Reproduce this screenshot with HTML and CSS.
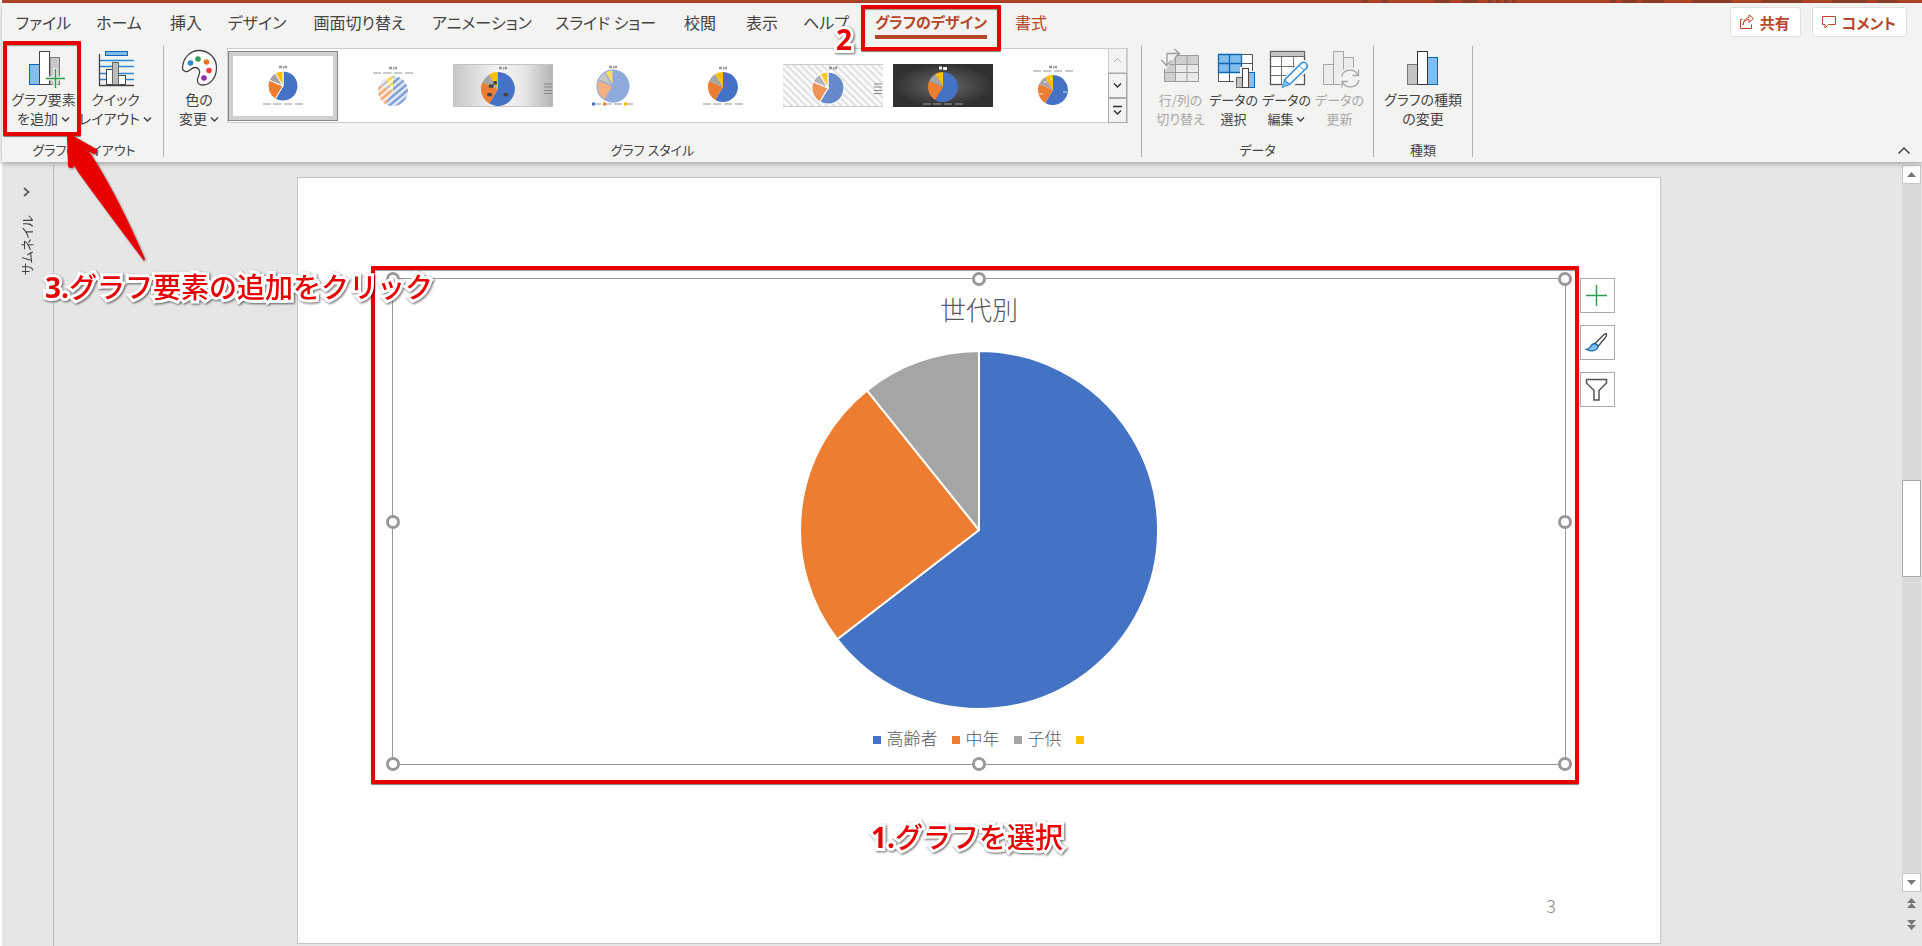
FILE: index.html
```html
<!DOCTYPE html>
<html lang="ja">
<head>
<meta charset="utf-8">
<title>グラフのデザイン</title>
<link rel="stylesheet" href="styles.css">
</head>
<body>
<svg class="defs" aria-hidden="true">
  <defs>
    <g id="pie">
      <path class="blue" d="M0 0V-15A15 15 0 1 1 -7.7 12.9Z"/>
      <path class="orange" d="M0 0L-7.7 12.9A15 15 0 0 1 -13.8 -5.9Z"/>
      <path class="grey" d="M0 0L-13.8 -5.9A15 15 0 0 1 -7.7 -12.9Z"/>
      <path class="gold" d="M0 0L-7.7 -12.9A15 15 0 0 1 0 -15Z"/>
    </g>
    <g id="caption"><path d="M-4 0H-1M0 0.500H1M1.500 0H4" stroke="#777" stroke-width="2.500" opacity=".75"/></g>
    <g id="keys"><path d="M-20 0H-12M-10 0H-1.500M1 0H9M12 0H20" stroke="#999" stroke-width="1.600" opacity=".7"/></g>
    <g id="sidekeys"><path d="M0 0H8M0 3H8M0 6.500H8M0 9.500H8" stroke="#888" stroke-width="1.200"/></g>
    <linearGradient id="silver" x1="0" y1="0" x2="1" y2="0"><stop offset="0" stop-color="#c6c6c6"/><stop offset=".45" stop-color="#f4f4f4"/><stop offset=".7" stop-color="#e8e8e8"/><stop offset="1" stop-color="#b4b4b4"/></linearGradient>
    <radialGradient id="coal"><stop offset="0" stop-color="#6a6a6a"/><stop offset="1" stop-color="#303030"/></radialGradient>
    <pattern id="hatch" width="5" height="5" patternUnits="userSpaceOnUse" patternTransform="rotate(-45)"><rect width="5" height="5" fill="#fafafa"/><rect width="2" height="5" fill="#e0e0e0"/></pattern>
    <pattern id="waves" width="5" height="5" patternUnits="userSpaceOnUse" patternTransform="rotate(50)"><rect width="2.600" height="5" fill="#fff" opacity=".8"/></pattern>
    <path id="chev" d="M1 2.500L4.500 6L8 2.500" fill="none" stroke="currentColor" stroke-width="1.500"/>
  </defs>
</svg>

<div class="titlebar"><svg width="760" height="3" aria-hidden="true"><path d="M200 1H206M220 1H226M272 1H288M300 1H316M326 1H330M334 1H338M342 1H346M350 1H354M448 1H454M460 1H475M480 1H502M530 1H570M600 1H640M670 1H705M715 1H735" stroke="#8f4029" stroke-width="3"/></svg></div>

<header class="ribbon">
  <div class="tabrow">
    <nav class="tabs">
      <button class="tab">ファイル</button>
      <button class="tab">ホーム</button>
      <button class="tab">挿入</button>
      <button class="tab">デザイン</button>
      <button class="tab">画面切り替え</button>
      <button class="tab">アニメーション</button>
      <button class="tab">スライド ショー</button>
      <button class="tab">校閲</button>
      <button class="tab">表示</button>
      <button class="tab">ヘルプ</button>
      <button class="tab active"><span class="tab-name">グラフのデザイン</span><span class="mark mark-tab"></span><span class="note note-2"><b>2</b></span></button>
      <button class="tab context">書式</button>
    </nav>
    <div class="actions">
      <button class="action"><svg width="16" height="16" viewBox="0 0 16 16"><path d="M3.500 5.500H1.500V14.500H12.500V10.500M4 11C4.300 7.500 6.500 5.500 10 5.500V8.500L14.500 4.500L10 1V3.500C6.500 3.800 4.500 6.500 4 11Z"/></svg>共有</button>
      <button class="action"><svg width="16" height="16" viewBox="0 0 16 16"><path d="M1.500 2.500H14.500V10.500H7.500L4 14V10.500H1.500Z"/></svg>コメント</button>
    </div>
  </div>

  <div class="groups">
    <section class="group group-layout">
      <div class="tools">
        <button class="tool">
          <svg class="icon" width="40" height="40" viewBox="0 0 40 40"><rect x="5.500" y="15.500" width="10" height="20" fill="#83bdec" stroke="#1066b5"/><rect x="26" y="8.500" width="9.500" height="27" fill="#c8c8c8" stroke="#7a7a7a"/><rect x="15.500" y="2.500" width="10" height="33" fill="#fff" stroke="#444"/><path d="M31.500 19V40M21 29.500H41" stroke="#f3f3f1" stroke-width="4"/><path d="M31.500 20V39M22 29.500H41" stroke="#2f9e4e" stroke-width="1.500"/></svg>
          <span>グラフ要素</span><span>を追加 <svg class="chev" width="9" height="9"><use href="#chev"/></svg></span>
          <span class="mark mark-tool"></span>
        </button>
        <button class="tool">
          <svg class="icon" width="40" height="40" viewBox="0 0 40 40"><rect x="9.500" y="2.500" width="22" height="4" fill="#83bdec" stroke="#1066b5"/><path d="M4 11.500H38M4 17.500H38M4 24.500H38M4 30.500H38" stroke="#2a86cf" stroke-width="1.300"/><rect x="10.500" y="20.500" width="6" height="15" fill="#fff" stroke="#444"/><rect x="22.500" y="26.500" width="7" height="9" fill="#fff" stroke="#444"/><rect x="16.500" y="13.500" width="6" height="22" fill="#bbb" stroke="#666"/><path d="M3.500 5V36.500H38" fill="none" stroke="#444" stroke-width="1.300"/></svg>
          <span>クイック</span><span>レイアウト <svg class="chev" width="9" height="9"><use href="#chev"/></svg></span>
        </button>
      </div>
      <h2 class="group-name">グラフのレイアウト</h2>
    </section>

    <section class="group group-style">
      <div class="tools">
        <button class="tool">
          <svg class="icon" width="40" height="40" viewBox="0 0 40 40"><path d="M3.500 19C4 8 12 1.500 20 1.500C30 1.500 37.500 9 37.500 18.500C37.500 29 31 36 24 36C17.500 36 17.500 31 20 26C22 21.500 19.500 18.500 16 18.500C12 18.500 10 23.500 7 22.500C4.500 22 3.500 21 3.500 19Z" fill="#fff" stroke="#444" stroke-width="1.300"/><circle cx="11.500" cy="14" r="2.800" fill="#2b88d0"/><circle cx="19" cy="10" r="2.800" fill="#2f9e4e"/><circle cx="27.500" cy="13" r="2.800" fill="#e8761a"/><circle cx="30" cy="21.500" r="2.800" fill="#f03a3e"/><circle cx="25" cy="29" r="2.800" fill="#8b2fa5"/></svg>
          <span>色の</span><span>変更 <svg class="chev" width="9" height="9"><use href="#chev"/></svg></span>
        </button>
        <div class="gallery">
          <button class="style selected" aria-label="スタイル 1"><svg width="100" height="60"><use href="#caption" x="50" y="11"/><g class="gap" transform="translate(50 30)"><use href="#pie"/></g><use href="#keys" x="50" y="48"/></svg></button>
          <button class="style" aria-label="スタイル 2"><svg width="100" height="60"><use href="#caption" x="50" y="12"/><use href="#keys" x="50" y="17"/><g opacity=".7" transform="translate(50 35)"><use href="#pie"/><circle r="16" fill="url(#waves)"/></g></svg></button>
          <button class="style" aria-label="スタイル 3"><svg width="100" height="60"><rect y="8" width="100" height="43" fill="url(#silver)"/><path d="M0 8.500H100M0 50.500H100" stroke="#c4c4c4"/><use href="#caption" x="50" y="12"/><g transform="translate(45 33) scale(1.130)"><use href="#pie"/><path d="M-9.500 5H-5.500M5 5H9M-8 -2.500H-4M-4 -5.500H-1" stroke="#444" stroke-width="3"/></g><use href="#sidekeys" x="91" y="28"/></svg></button>
          <button class="style" aria-label="スタイル 4"><svg width="100" height="60"><use href="#caption" x="50" y="11"/><g class="soft" transform="translate(50 30) scale(1.070)"><use href="#pie"/></g><use href="#keys" x="50" y="48"/><path d="M29 48H32" stroke="#4472c4" stroke-width="3"/><path d="M40 48H43" stroke="#ed7d31" stroke-width="3"/><path d="M61 48H64" stroke="#ffc000" stroke-width="3"/></svg></button>
          <button class="style" aria-label="スタイル 5"><svg width="100" height="60"><use href="#caption" x="50" y="12"/><use href="#pie" x="50" y="31"/><use href="#keys" x="50" y="48"/></svg></button>
          <button class="style" aria-label="スタイル 6"><svg width="100" height="60"><rect y="8" width="100" height="43" fill="url(#hatch)"/><path d="M0 8.500H100M0 50.500H100" stroke="#ccc"/><use href="#caption" x="50" y="12"/><g class="gap" opacity=".8" transform="translate(45 32) scale(1.070)"><use href="#pie"/></g><use href="#sidekeys" x="91" y="28"/></svg></button>
          <button class="style" aria-label="スタイル 7"><svg width="100" height="60"><rect y="8" width="100" height="43" fill="url(#coal)"/><path d="M-4 12H-1M0 12.500H4" transform="translate(50 0)" stroke="#eee" stroke-width="3"/><use href="#pie" x="50" y="31"/><use href="#keys" x="50" y="48"/></svg></button>
          <button class="style" aria-label="スタイル 8"><svg width="100" height="60"><use href="#caption" x="50" y="11"/><use href="#keys" x="50" y="15"/><use href="#pie" x="50" y="34"/><path d="M36 38H40M60 36H64M41 26H44M47 23H49" stroke="#fff" opacity=".8"/></svg></button>
          <div class="gallery-nav">
            <button class="off" aria-label="前の行"><svg width="9" height="9"><path d="M1 6L4.500 2.500L8 6" fill="none" stroke="currentColor"/></svg></button>
            <button aria-label="次の行"><svg width="9" height="9"><use href="#chev"/></svg></button>
            <button aria-label="その他"><svg width="9" height="12"><path d="M0 1.500H9" stroke="currentColor" stroke-width="1.500"/><use href="#chev" y="3"/></svg></button>
          </div>
        </div>
      </div>
      <h2 class="group-name">グラフ スタイル</h2>
    </section>

    <section class="group group-data">
      <div class="tools">
        <button class="tool" disabled>
          <svg class="icon" width="40" height="40" viewBox="0 0 40 40"><rect x="3.500" y="6.500" width="34" height="26" fill="#e9e9e9"/><path d="M3.500 6.500H37.500V15H15V32.500H3.500Z" fill="#cfcfcf"/><path d="M3.500 6.500H37.500V32.500H3.500ZM14.500 6.500V32.500M26 6.500V32.500M3.500 15.500H37.500M3.500 23.500H37.500" fill="none" stroke="#9c9c9c"/><path d="M-1 0H20L5 20H-1Z" fill="#f3f3f1"/><path d="M6 16V4.500H18M0.500 11L5.500 16.500L10.500 11.500M13.500 0L18.500 4.500L13.500 9.500" fill="none" stroke="#9c9c9c" stroke-width="1.300"/></svg>
          <span>行/列の</span><span>切り替え</span>
        </button>
        <button class="tool">
          <svg class="icon" width="40" height="40" viewBox="0 0 40 40"><rect x="4.500" y="5.500" width="34" height="27" fill="#fff"/><rect x="4.500" y="5.500" width="23" height="18" fill="#83bdec"/><path d="M4.500 5.500H38.500V32.500H4.500ZM15.500 5.500V32.500M27.500 5.500V32.500M4.500 14.500H38.500M4.500 23.500H38.500" fill="none" stroke="#555"/><path d="M4.500 5.500H27.500V23.500H4.500ZM15.500 5.500V23.500M4.500 14.500H27.500" fill="none" stroke="#1066b5" stroke-width="1.300"/><path d="M20 26H26V18H36V22H42V40H20Z" fill="#f3f3f1"/><rect x="22.500" y="28.500" width="6" height="10" fill="#c4c4c4" stroke="#666"/><rect x="34.500" y="23.500" width="6" height="15" fill="#83bdec" stroke="#1066b5"/><rect x="28.500" y="19.500" width="6" height="19" fill="#fff" stroke="#444"/></svg>
          <span>データの</span><span>選択</span>
        </button>
        <button class="tool">
          <svg class="icon" width="40" height="40" viewBox="0 0 40 40"><rect x="3.500" y="2.500" width="34" height="33" fill="#fff" stroke="#555" stroke-width="1.300"/><rect x="3.500" y="2.500" width="34" height="5" fill="#c4c4c4" stroke="#666"/><path d="M14.500 8V35M26.500 8V35M4 17.500H37M4 26.500H37" stroke="#777"/><path d="M14 39L17 29L32 13L38 11L41 16L40 22L25 39Z" fill="#f3f3f1"/><path d="M17.500 31L34 14.500Q37.500 12 39.500 15T39 19.500L22.500 35.500Z" fill="#fff" stroke="#2b8edb" stroke-width="1.500"/><path d="M15 38.500L17.500 31L22.500 35.500Z" fill="#83bdec" stroke="#2b8edb"/><path d="M32 16.500L37 21" stroke="#2b8edb"/></svg>
          <span>データの</span><span>編集 <svg class="chev" width="9" height="9"><use href="#chev"/></svg></span>
        </button>
        <button class="tool" disabled>
          <svg class="icon" width="40" height="40" viewBox="0 0 40 40"><g fill="#ececec" stroke="#a6a6a6"><rect x="3.500" y="15.500" width="10" height="20"/><rect x="23.500" y="8.500" width="10" height="27"/><rect x="13.500" y="2.500" width="10" height="33"/></g><circle cx="30" cy="29.500" r="11" fill="#f3f3f1"/><path d="M21.500 28A8.800 8.800 0 0 1 38 26M38.500 20.500V26.500H32.500M39 31A8.800 8.800 0 0 1 22.500 33M22 38.500V32.500H28" fill="none" stroke="#a6a6a6" stroke-width="1.300"/></svg>
          <span>データの</span><span>更新</span>
        </button>
      </div>
      <h2 class="group-name">データ</h2>
    </section>

    <section class="group group-type">
      <div class="tools">
        <button class="tool">
          <svg class="icon" width="40" height="40" viewBox="0 0 40 40"><rect x="4.500" y="15.500" width="10" height="20" fill="#c4c4c4" stroke="#777"/><rect x="24.500" y="8.500" width="10" height="27" fill="#83bdec" stroke="#1066b5"/><rect x="14.500" y="2.500" width="10" height="33" fill="#fff" stroke="#333"/></svg>
          <span>グラフの種類</span><span>の変更</span>
        </button>
      </div>
      <h2 class="group-name">種類</h2>
    </section>
    <button class="collapse" aria-label="リボンを折りたたむ"><svg width="14" height="9"><path d="M1.500 7.500L7 2L12.500 7.500" fill="none" stroke="#444" stroke-width="1.500"/></svg></button>
  </div>
</header>

<main class="workspace">
  <aside class="thumbs">
    <button aria-label="サムネイルを展開"><svg width="9" height="10"><path d="M2 1L6.500 5L2 9" fill="none" stroke="#666" stroke-width="2"/></svg></button>
    <span class="thumbs-name">サムネイル</span>
  </aside>
  <div class="canvas">
    <article class="slide">
      <figure class="chart">
        <figcaption class="chart-title">世代別</figcaption>
        <svg class="pie" viewBox="-179 -179 358 358" role="img" aria-label="世代別の円グラフ">
          <g stroke="#fff" stroke-width="2" stroke-linejoin="round"><path class="blue" d="M0 0V-179A179 179 0 1 1 -141.800 109.200Z"/><path class="orange" d="M0 0L-141.800 109.200A179 179 0 0 1 -112 -139.600Z"/><path class="grey" d="M0 0L-112 -139.600A179 179 0 0 1 0 -179Z"/></g>
        </svg>
        <ul class="legend"><li class="k-blue">高齢者</li><li class="k-orange">中年</li><li class="k-grey">子供</li><li class="k-gold"></li></ul>
        <i class="handle n w"></i><i class="handle n c"></i><i class="handle n e"></i>
        <i class="handle m w"></i><i class="handle m e"></i>
        <i class="handle s w"></i><i class="handle s c"></i><i class="handle s e"></i>
        <div class="mark mark-chart"></div>
        <div class="chart-tools">
          <button aria-label="グラフ要素"><svg width="24" height="24"><path d="M11.500 1V22M1 11.500H22" stroke="#2f9e4e" stroke-width="1.500"/></svg></button>
          <button aria-label="グラフ スタイル"><svg width="24" height="24"><path d="M10 12.500L18 4.500Q21 2 21.500 3T20 7L13 15.500Z" fill="#fff" stroke="#444" stroke-width="1.300"/><path d="M1.500 18.500C6 18 5 13 9.500 12.500C12 13 13.500 14.500 12.500 17C10.500 20.500 5 20.500 1.500 18.500Z" fill="#83bdec" stroke="#1066b5" stroke-width="1.300"/></svg></button>
          <button aria-label="グラフ フィルター"><svg width="24" height="24"><path d="M1.500 1.500H21.500V5L14 12.500V22H9V12.500L1.500 5Z" fill="#fff" stroke="#555" stroke-width="1.500"/></svg></button>
        </div>
      </figure>
      <p class="note note-1"><b>1.</b>グラフを選択</p>
      <footer class="page-no">3</footer>
    </article>
  </div>
  <div class="scroll">
    <button class="step" aria-label="上へ"><svg width="9" height="5"><path d="M0 5L4.500 0L9 5Z"/></svg></button>
    <div class="track"><div class="thumb"></div></div>
    <button class="step" aria-label="下へ"><svg width="9" height="5"><path d="M0 0L4.500 5L9 0Z"/></svg></button>
    <button class="jump" aria-label="前のスライド"><svg width="9" height="10"><path d="M0 5L4.500 0L9 5ZM0 10L4.500 5L9 10Z"/></svg></button>
    <button class="jump" aria-label="次のスライド"><svg width="9" height="10"><path d="M0 0L4.500 5L9 0ZM0 5L4.500 10L9 5Z"/></svg></button>
  </div>
</main>

<svg class="arrow" width="84" height="134" viewBox="0 0 84 134" aria-hidden="true"><path d="M8 8L31 21" stroke="#e80000" stroke-width="6" stroke-linecap="round"/><path d="M7 7L8 35" stroke="#e80000" stroke-width="6" stroke-linecap="round"/><path d="M4 4L28 24Q56 68 82 129L81 131Q44 82 15 42L7 28Z" fill="#e80000"/></svg>
<p class="note note-3"><b>3.</b>グラフ要素の追加をクリック</p>
</body>
</html>
```

FILE: styles.css
```css
* { box-sizing: border-box; }

body {
  margin: 0;
  padding-left: 2px;
  height: 100vh;
  display: flex;
  flex-direction: column;
  position: relative;
  overflow: hidden;
  background: #fff;
  color: #444;
  font-family: "Noto Sans CJK JP", sans-serif;
  font-size: 14px;
  font-feature-settings: "palt";
}

button {
  margin: 0;
  padding: 0;
  border: 0;
  background: none;
  color: inherit;
  font: inherit;
  font-feature-settings: inherit;
  white-space: nowrap;
}

.defs { position: absolute; width: 0; height: 0; }
.blue { fill: #4472c4; }
.orange { fill: #ed7d31; }
.grey { fill: #a5a5a5; }
.gold { fill: #ffc000; }
.gap { stroke: #fff; stroke-width: 1; }
.soft { opacity: .6; stroke: #4472c4; stroke-width: 1; }

.titlebar { height: 3px; background: #b7472a; display: flex; justify-content: flex-end; }

/* Ribbon */
.ribbon { height: 159px; background: #f3f3f1; position: relative; z-index: 1; box-shadow: 0 1px 6px rgba(0, 0, 0, .35); }
.tabrow { height: 43px; display: flex; justify-content: space-between; }
.tabs { display: grid; grid-template-columns: 77px 74px 60px 82px 123px 122px 125px 64px 60px 68px 142px 58px; padding-left: 3px; }
.tab { position: relative; padding-top: 9px; height: 43px; font-size: 16px; line-height: 20px; display: flex; justify-content: center; align-items: flex-start; }
.tab.active { color: #b7472a; font-size: 15px; font-weight: 700; }
.tab.context { color: #b7472a; }
.tab-name { border-bottom: 4px solid #b7472a; padding-bottom: 3px; }
.actions { display: flex; gap: 11px; padding: 4px 15px 0 0; }
.action { height: 30px; padding: 0 10px 0 8px; display: flex; align-items: center; gap: 5px; background: #fff; border: 1px solid #e1dfdd; border-radius: 3px; color: #b7472a; font-size: 15px; font-weight: 700; }
.action svg { fill: none; stroke: #b7472a; stroke-width: 1; }

.groups { display: flex; height: 116px; }
.group { height: 111px; display: flex; flex-direction: column; border-right: 1px solid #b1b1b1; }
.tools { display: flex; }
.group-name { margin: auto 0 0; font-size: 13px; font-weight: 400; line-height: 14px; text-align: center; }
.tool { position: relative; padding-top: 3px; display: flex; flex-direction: column; align-items: center; line-height: 19px; }
.tool:disabled { color: #a8a8a8; }
.icon { overflow: visible; margin-bottom: 1px; }
.icon + span { height: 19px; }
.chev { vertical-align: 0; }
.group-layout { width: 162px; padding-left: 3px; }
.group-layout .tools { display: grid; grid-template-columns: 77px 67px; }
.group-style { width: 978px; }
.group-style .tool { width: 63px; padding-left: 7px; }
.group-data { width: 232px; }
.group-data .tools { padding-left: 12px; display: grid; grid-template-columns: repeat(4, 53px); font-size: 13px; }
.group-type { width: 99px; }
.group-type .tools { justify-content: center; }
.collapse { margin: auto 11px 3px auto; }

.gallery { display: flex; align-items: center; margin-top: 2px; height: 75px; background: #fff; border: 1px solid #ccc; }
.style { width: 110px; height: 70px; display: grid; place-items: center; }
.style.selected { background: #fff; border: 1px solid #888; box-shadow: inset 0 0 0 4px #cfcfcd; }
.gallery-nav { width: 19px; height: 75px; display: grid; grid-template-rows: repeat(3, 1fr); }
.gallery-nav button { display: grid; place-items: center; background: #f3f3f1; border: 1px solid #aaa; color: #333; }
.gallery-nav .off { color: #aaa; border-color: #ccc; }

/* Editing area */
.workspace { flex: 1; min-height: 0; display: grid; grid-template-columns: 52px 1fr 20px; background: #e6e6e6; }
.thumbs { margin-top: 3px; border-right: 1px solid #bdbdbd; padding: 22px 3px 0 0; display: flex; flex-direction: column; align-items: center; gap: 18px; }
.thumbs button { line-height: 10px; }
.thumbs svg { display: block; }
.thumbs-name { writing-mode: vertical-rl; text-orientation: sideways; transform: rotate(180deg); font-size: 13px; }
.canvas { min-height: 0; padding: 15px 0 2px 2px; display: flex; justify-content: center; }
.slide { height: 100%; aspect-ratio: 16 / 9; background: #fff; border: 1px solid #c6c6c6; padding: 100px 94px 0; display: flex; flex-direction: column; }

.chart { position: relative; height: 487px; margin: 0; border: 1px solid #999; display: flex; flex-direction: column; align-items: center; }
.chart-title { margin-top: 13px; font-size: 26px; line-height: 34px; font-weight: 300; color: #595959; }
.pie { width: 358px; height: 358px; margin-top: 25px; }
.legend { list-style: none; margin: 17px 0 0; padding: 0; display: flex; gap: 15px; font-size: 17px; line-height: 24px; font-weight: 300; color: #595959; }
.legend li { display: flex; align-items: center; gap: 5px; }
.legend li::before { content: ""; width: 8px; height: 8px; margin-top: 3px; background: currentColor; }
.k-blue::before { color: #4472c4; }
.k-orange::before { color: #ed7d31; }
.k-grey::before { color: #a5a5a5; }
.k-gold::before { color: #ffc000; }

.handle { position: absolute; width: 14px; height: 14px; margin: -7px; border: 3px solid #999; border-radius: 50%; background: #fff; }
.handle.n { top: 0; }
.handle.m { top: 50%; }
.handle.s { top: 100%; }
.handle.w { left: 0; }
.handle.c { left: 50%; }
.handle.e { left: 100%; }
.chart-tools { position: absolute; top: -1px; left: calc(100% + 15px); display: grid; gap: 12px; }
.chart-tools button { width: 35px; height: 35px; display: grid; place-items: center; background: #fff; border: 1px solid #ababab; }

.page-no { margin-top: 38px; padding-right: 10px; text-align: right; font-size: 18px; line-height: 24px; font-weight: 300; color: #898989; }

.scroll { padding: 3px 1px 0 0; display: flex; flex-direction: column; fill: #777; }
.step { height: 19px; display: grid; place-items: center; background: #fff; border: 1px solid #c6c6c6; }
.track { flex: 1; background: #dadada; display: grid; grid-template-rows: 43fr 14fr 43fr; }
.thumb { grid-row: 2; background: #fff; border: 1px solid #ababab; }
.jump { height: 22px; display: grid; place-items: center; }
.jump:last-child { margin-bottom: 10px; }

/* Callouts */
.mark { position: absolute; border: 4px solid #e80000; border-radius: 1px; box-shadow: 0 1px 1px rgba(0, 0, 0, .5), inset 0 1px 1px rgba(0, 0, 0, .4); pointer-events: none; }
.mark-tab { inset: 2px 1px -5px; }
.mark-tool { inset: -5px 1px auto -2px; height: 95px; }
.mark-chart { inset: -13px -14px -20px -22px; }
.note { margin: 0; color: #e80000; font-family: "Noto Sans CJK JP", sans-serif; font-size: 28px; line-height: 36px; font-weight: 500; font-feature-settings: normal; white-space: nowrap; -webkit-text-stroke: 6px #fff; paint-order: stroke fill; filter: drop-shadow(1px 1px 1px rgba(0, 0, 0, .6)); }
.note b { font-family: "Open Sans", sans-serif; font-weight: 700; }
.note-1 { margin-top: 53px; padding-right: 24px; text-align: center; }
.note-2 { position: absolute; left: -24px; top: 17px; }
.note-3 { position: absolute; left: 45px; top: 268px; z-index: 3; }
.arrow { position: absolute; left: 63px; top: 130px; z-index: 2; overflow: visible; filter: drop-shadow(1px 1px 1px rgba(0, 0, 0, .4)); }
```
